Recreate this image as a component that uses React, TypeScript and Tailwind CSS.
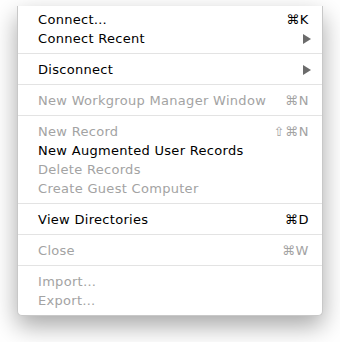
type Item = {
  label: string;
  shortcut?: string;
  submenu?: boolean;
  disabled?: boolean;
};

const groups: Item[][] = [
  [
    { label: "Connect…", shortcut: "⌘K" },
    { label: "Connect Recent", submenu: true },
  ],
  [{ label: "Disconnect", submenu: true }],
  [{ label: "New Workgroup Manager Window", shortcut: "⌘N", disabled: true }],
  [
    { label: "New Record", shortcut: "⇧⌘N", disabled: true },
    { label: "New Augmented User Records" },
    { label: "Delete Records", disabled: true },
    { label: "Create Guest Computer", disabled: true },
  ],
  [{ label: "View Directories", shortcut: "⌘D" }],
  [{ label: "Close", shortcut: "⌘W", disabled: true }],
  [
    { label: "Import…", disabled: true },
    { label: "Export…", disabled: true },
  ],
];

const Arrow = () => (
  <svg width="8" height="10" viewBox="0 0 8 10" className="block">
    <path d="M0 0 L8 5 L0 10 Z" fill="#6b6b6b" />
  </svg>
);

const Row = ({ item }: { item: Item }) => (
  <div
    className={`flex h-[19px] items-center justify-between pl-[20px] pr-[13px] text-[13px] leading-[19px] tracking-[0.3px] ${
      item.disabled ? "text-[#a3a3a3]" : "text-black"
    }`}
  >
    <span>{item.label}</span>
    {item.shortcut && <span className="tracking-[0.6px]">{item.shortcut}</span>}
    {item.submenu && (
      <span className="-mr-[2px]">
        <Arrow />
      </span>
    )}
  </div>
);

export default function App() {
  return (
    <div className="h-[342px] w-[340px] bg-white pt-[6px] pl-[17px]">
      <div
        className="w-[306px] rounded-b-[5px] border border-t-0 border-[#c8c8c8] bg-white pt-[4px] pb-[5px] shadow-[0_10px_24px_rgba(0,0,0,0.35)]"
        style={{ fontFamily: '"Lucida Grande", "DejaVu Sans", sans-serif' }}
      >
        {groups.map((g, i) => (
          <div key={i}>
            {i > 0 && <div className="mt-[5px] mb-[6px] h-px bg-[#e3e3e3]" />}
            {g.map((item) => (
              <Row key={item.label} item={item} />
            ))}
          </div>
        ))}
      </div>
    </div>
  );
}
